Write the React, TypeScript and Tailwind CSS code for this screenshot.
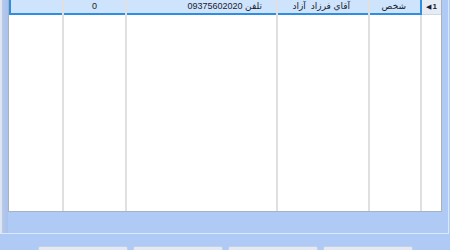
const cols = [
  { w: "w-[55px]", text: "", align: "justify-center" },
  { w: "w-[63px]", text: "0", align: "justify-center" },
  { w: "w-[151px]", text: "تلفن 09375602020", align: "justify-start pr-[14px]" },
  { w: "w-[92px]", text: "آقاي فرزاد  آزاد", align: "justify-start pr-[18px]" },
  { w: "w-[52px]", text: "شخص", align: "justify-start pr-[14px]" },
]

export default function App() {
  return (
    <div className="w-[450px] h-[250px] overflow-hidden bg-[#afcaf5] text-[9px] text-[#1c1c30] [font-family:'Liberation_Sans','DejaVu_Sans',sans-serif]">
      <div className="h-[234px] w-[449px] border-r border-b border-[#dbe7fb] flex">
        <div className="w-[8px] h-full flex">
          <div className="w-[2px] bg-[#dfe6f3]" />
          <div className="w-[6px] bg-gradient-to-r from-[#b9c9e6] to-[#a8c2ee]" />
        </div>
        <div className="h-[212px] w-[434px] bg-white border-l border-b border-[#a9b2c0] flex">
          {cols.map((c, i) => (
            <div key={i} className={`${c.w} h-full flex flex-col border-r-2 border-[#e0e0e0]`}>
              <div
                className={`h-[15px] shrink-0 bg-[#cde4fc] border-b-2 border-[#2f8ee2] flex items-center whitespace-pre ${c.align} ${i === 0 ? "border-l-2 border-l-[#2f8ee2]" : ""} ${i === 4 ? "border-r-2 border-r-[#2f8ee2] -mr-[2px]" : ""}`}
                dir={i >= 2 ? "rtl" : "ltr"}
              >
                {c.text}
              </div>
            </div>
          ))}
          <div className="w-[20px] h-full flex flex-col border-r border-[#b0b0b0]">
            <div className="h-[15px] shrink-0 bg-[#e5ecf6] border-b border-[#d0d8e4] flex items-center justify-center gap-[1px] text-[8px] font-bold">
              <span className="text-[7px]">◀</span>
              <span>1</span>
            </div>
          </div>
        </div>
      </div>
      <div className="flex gap-[5px] pl-[38px] pt-[12px]">
        {[0, 1, 2, 3].map((k) => (
          <div key={k} className="w-[90px] h-[24px] bg-[#e3eaf5] border border-[#c5d0e2] rounded-[2px]" />
        ))}
      </div>
    </div>
  )
}
